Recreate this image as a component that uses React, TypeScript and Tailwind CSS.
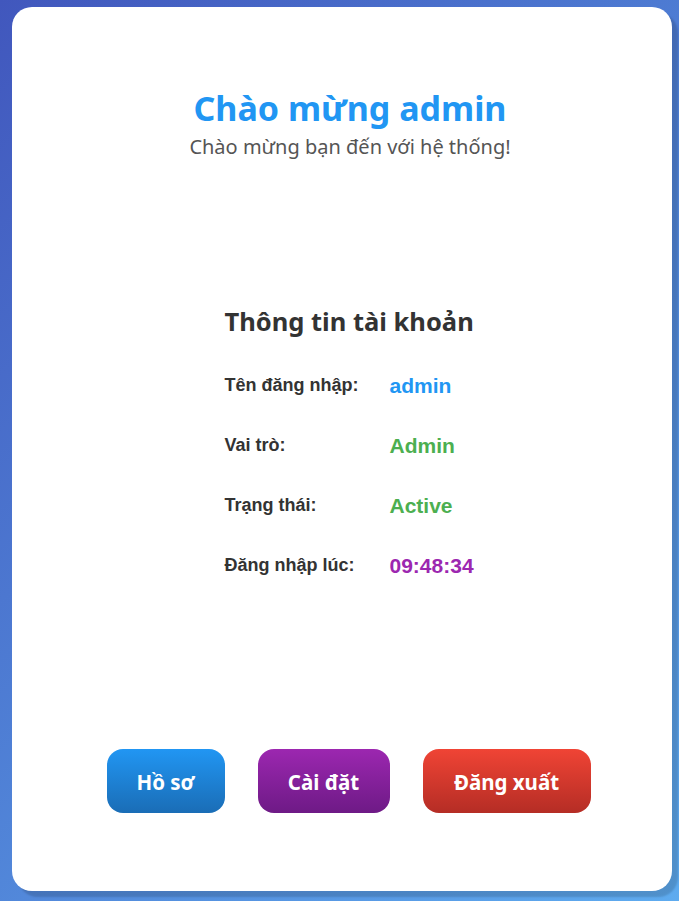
const sans = "font-['Noto_Sans','Open_Sans',sans-serif]"
const arial = "font-['Liberation_Sans',Arial,sans-serif]"

const rows = [
  { label: 'Tên đăng nhập:', value: 'admin', color: 'text-[#2196f3]' },
  { label: 'Vai trò:', value: 'Admin', color: 'text-[#4caf50]' },
  { label: 'Trạng thái:', value: 'Active', color: 'text-[#4caf50]' },
  { label: 'Đăng nhập lúc:', value: '09:48:34', color: 'text-[#9c27b0]' },
]

export default function App() {
  return (
    <div className="min-h-[901px] w-full bg-[linear-gradient(135deg,#4157bd,#5eabef)] pl-[12px] pt-[7px]">
      <div className={`${sans} flex h-[884px] w-[660px] flex-col items-center rounded-[20px] bg-white shadow-[6px_6px_2px_rgba(0,0,0,0.15)]`}>
        {/* header */}
        <div className="mt-[79px] ml-[16px] flex flex-col items-center">
          <h1 className="text-[34px] leading-[44px] font-bold text-[#2196f3]">Chào mừng admin</h1>
          <p className="mt-[4px] text-[20px] leading-[26px] text-[#555]">Chào mừng bạn đến với hệ thống!</p>
        </div>

        {/* account info */}
        <div className="mt-[144px] ml-[15px] flex w-[250px] flex-col">
          <h2 className="text-[25.5px] leading-[34px] font-bold whitespace-nowrap text-[#333]">Thông tin tài khoản</h2>
          <div className="mt-[36px] flex flex-col gap-[36px]">
            {rows.map((r) => (
              <div key={r.label} className="flex h-[24px] items-center">
                <span className={`${arial} w-[165px] -translate-y-px text-[18px] font-bold text-[#333]`}>{r.label}</span>
                <span className={`${arial} text-[21px] font-bold ${r.color}`}>{r.value}</span>
              </div>
            ))}
          </div>
        </div>

        {/* actions */}
        <div className="mt-auto mb-[78px] ml-[13px] flex gap-[33px]">
          <button className="h-16 w-[118px] rounded-2xl bg-gradient-to-b from-[#2196f3] to-[#1a6db6] pt-[3px] text-[20.5px] font-bold text-white">
            Hồ sơ
          </button>
          <button className="h-16 w-[132px] rounded-2xl bg-gradient-to-b from-[#9c27b0] to-[#6e1a86] pt-[3px] text-[20.5px] font-bold text-white">
            Cài đặt
          </button>
          <button className="h-16 w-[168px] rounded-2xl bg-gradient-to-b from-[#f04435] to-[#b52d25] pt-[3px] text-[20.5px] font-bold text-white">
            Đăng xuất
          </button>
        </div>
      </div>
    </div>
  )
}
